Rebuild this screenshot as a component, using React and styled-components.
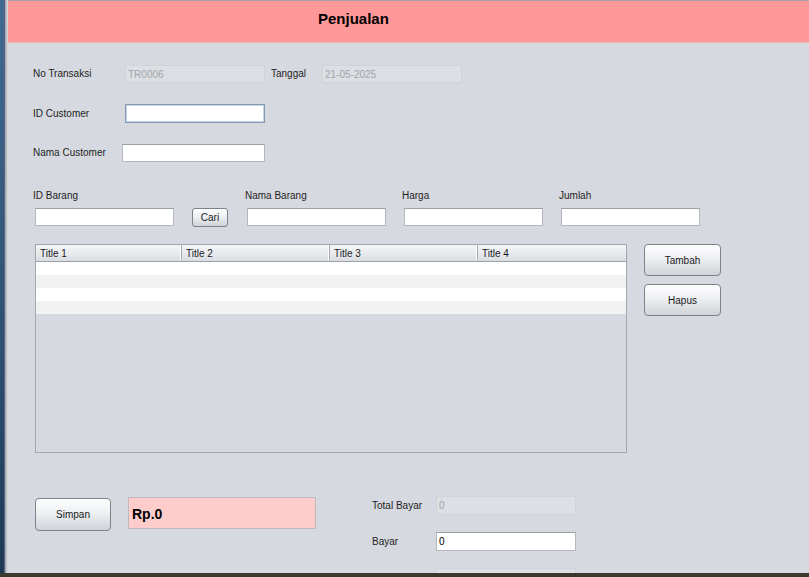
import React from "react";
import styled, { createGlobalStyle } from "styled-components";

const Global = createGlobalStyle`
  html, body { margin: 0; padding: 0; background: #d6d9df; overflow: hidden; }
  * { box-sizing: border-box; }
`;

const Screen = styled.div`
  width: 809px;
  height: 577px;
  display: flex;
  flex-direction: column;
  font-family: "Liberation Sans", Arial, sans-serif;
  font-size: 10px;
  color: #1e1e1e;
`;

const Body = styled.div`
  flex: 1;
  display: flex;
  min-height: 0;
`;

const WindowEdge = styled.div`
  width: 8px;
  flex: none;
  background: linear-gradient(
    to right,
    transparent 0 4px,
    #56657a 4px 5px,
    #a4a9b1 5px 6px,
    #bfc3c9 6px 7px,
    #d0d3d9 7px 8px
  ),
  linear-gradient(to bottom, #416a92, #2d5073 60%, #1d3956);
`;

const BottomBar = styled.div`
  height: 4px;
  flex: none;
  background: #3a3a30;
`;

const Main = styled.div`
  flex: 1;
  background: #d6d9df;
  overflow: hidden;
  display: flex;
  flex-direction: column;
`;

const Header = styled.header`
  height: 43px;
  flex: none;
  background: #ff9999;
  border-top: 1px solid #a7a0a6;
  border-bottom: 1px solid #eeb4b6;
  padding: 9px 0 0 310px;
`;

const Title = styled.h1`
  margin: 0;
  font: bold 15px/18px "Liberation Sans", Arial, sans-serif;
  color: #000;
`;

const Content = styled.div`
  padding-left: 25px;
  display: flex;
  flex-direction: column;
`;

const Row = styled.div`
  display: flex;
  align-items: ${(p) => p.$align || "center"};
  margin-top: ${(p) => p.$mt || 0}px;
`;

const Label = styled.span`
  display: inline-block;
  width: ${(p) => (p.$w ? `${p.$w}px` : "auto")};
  margin-left: ${(p) => p.$ml || 0}px;
  line-height: 12px;
  white-space: nowrap;
  flex: none;
`;

const Field = styled.input`
  width: ${(p) => p.$w || 140}px;
  height: ${(p) => p.$h || 18}px;
  margin: 0;
  margin-left: ${(p) => p.$ml || 0}px;
  padding: 0 2px;
  flex: none;
  font: 10px "Liberation Sans", Arial, sans-serif;
  color: #000;
  outline: none;
  background: #fff;
  border: 1px solid #b3b8bf;
  border-top-color: #9a9fa6;
  border-radius: 0;

  &:disabled {
    background: #dcdfe3;
    border: 1px solid #d0d3d8;
    color: #a2a4a8;
  }

  ${(p) =>
    p.$focus &&
    `
    border: 1px solid #8199b4;
    box-shadow: inset 0 0 0 1px #c8d5e3;
  `}
`;

const Button = styled.button`
  width: ${(p) => p.$w}px;
  height: ${(p) => p.$h}px;
  margin: 0;
  margin-left: ${(p) => p.$ml || 0}px;
  margin-top: ${(p) => p.$mt || 0}px;
  margin-bottom: ${(p) => p.$mb || 0}px;
  padding: 0;
  flex: none;
  font: 10px "Liberation Sans", Arial, sans-serif;
  color: #1a1a1a;
  border: 1px solid #7d838b;
  border-radius: ${(p) => p.$r || 4}px;
  background: linear-gradient(to bottom, #fdfdfe 0%, #eef0f2 45%, #dadde2 80%, #cfd3d8 100%);
  box-shadow: inset 0 1px 0 #ffffff;
`;

const ItemGroup = styled.div`
  display: flex;
  flex-direction: column;
  margin-left: ${(p) => p.$ml || 0}px;
  flex: none;
`;

const GroupLabel = styled.span`
  line-height: 12px;
  height: 12px;
  margin-bottom: 6px;
`;

const TableWrap = styled.div`
  width: 592px;
  height: 209px;
  margin-left: 2px;
  border: 1px solid #a3a7ad;
  background: #d6d9df;
  flex: none;
`;

const THead = styled.div`
  display: grid;
  grid-template-columns: 146px 148px 148px 148px;
  height: 17px;
  border-bottom: 1px solid #9ca1a7;
  background: linear-gradient(to bottom, #f4f5f7, #e6e8eb 60%, #d9dce1);
`;

const TH = styled.div`
  padding: 1px 0 0 4px;
  line-height: 15px;
  color: #1a1a2a;
  border-right: ${(p) => (p.$last ? "none" : "1px solid #a5aab0")};
  box-shadow: ${(p) => (p.$last ? "none" : "inset -1px 0 0 #ffffff")};
`;

const TRow = styled.div`
  height: 13px;
  background: ${(p) => (p.$alt ? "#f2f2f2" : "#ffffff")};
`;

const SideButtons = styled.div`
  display: flex;
  flex-direction: column;
  gap: 8px;
  margin-left: 17px;
`;

const Total = styled.div`
  width: 188px;
  height: 32px;
  margin-left: 17px;
  margin-top: 1px;
  flex: none;
  background: #ffcccc;
  border: 1px solid #c2b9ba;
  padding: 8px 0 0 3px;
  font: bold 14px/16px "Liberation Sans", Arial, sans-serif;
  color: #000;
`;

const PayColumn = styled.div`
  display: flex;
  flex-direction: column;
  gap: 17px;
  margin-left: 56px;
`;

const PayRow = styled.div`
  display: flex;
  align-items: center;
`;

export default function App() {
  const rows = [false, true, false, true];
  return (
    <Screen>
      <Global />
      <Body>
        <WindowEdge />
        <Main>
          <Header>
            <Title>Penjualan</Title>
          </Header>
          <Content>
            <Row $mt={22}>
              <Label $w={92}>No Transaksi</Label>
              <Field disabled defaultValue="TR0006" />
              <Label $w={51} $ml={6}>Tanggal</Label>
              <Field disabled defaultValue="21-05-2025" />
            </Row>
            <Row $mt={21}>
              <Label $w={92}>ID Customer</Label>
              <Field $h={19} $focus defaultValue="" />
            </Row>
            <Row $mt={21}>
              <Label $w={89}>Nama Customer</Label>
              <Field $w={143} defaultValue="" />
            </Row>
            <Row $mt={28} $align="flex-end">
              <ItemGroup>
                <GroupLabel>ID Barang</GroupLabel>
                <Field $w={139} $ml={2} defaultValue="" />
              </ItemGroup>
              <Button $w={36} $h={19} $ml={18} $r={3} $mb={-1}>
                Cari
              </Button>
              <ItemGroup $ml={17}>
                <GroupLabel>Nama Barang</GroupLabel>
                <Field $w={139} $ml={2} defaultValue="" />
              </ItemGroup>
              <ItemGroup $ml={16}>
                <GroupLabel>Harga</GroupLabel>
                <Field $w={139} $ml={2} defaultValue="" />
              </ItemGroup>
              <ItemGroup $ml={16}>
                <GroupLabel>Jumlah</GroupLabel>
                <Field $w={139} $ml={2} defaultValue="" />
              </ItemGroup>
            </Row>
            <Row $mt={18} $align="flex-start">
              <TableWrap>
                <THead>
                  <TH>Title 1</TH>
                  <TH>Title 2</TH>
                  <TH>Title 3</TH>
                  <TH $last>Title 4</TH>
                </THead>
                {rows.map((alt, i) => (
                  <TRow key={i} $alt={alt} />
                ))}
              </TableWrap>
              <SideButtons>
                <Button $w={77} $h={32}>Tambah</Button>
                <Button $w={77} $h={32}>Hapus</Button>
              </SideButtons>
            </Row>
            <Row $mt={43} $align="flex-start">
              <Button $w={76} $h={33} $ml={2} $mt={2}>Simpan</Button>
              <Total>Rp.0</Total>
              <PayColumn>
                <PayRow>
                  <Label $w={64}>Total Bayar</Label>
                  <Field $h={19} disabled defaultValue="0" />
                </PayRow>
                <PayRow>
                  <Label $w={64}>Bayar</Label>
                  <Field $h={19} defaultValue="0" />
                </PayRow>
                <PayRow>
                  <Label $w={64}></Label>
                  <Field $h={19} disabled defaultValue="" />
                </PayRow>
              </PayColumn>
            </Row>
          </Content>
        </Main>
      </Body>
      <BottomBar />
    </Screen>
  );
}
